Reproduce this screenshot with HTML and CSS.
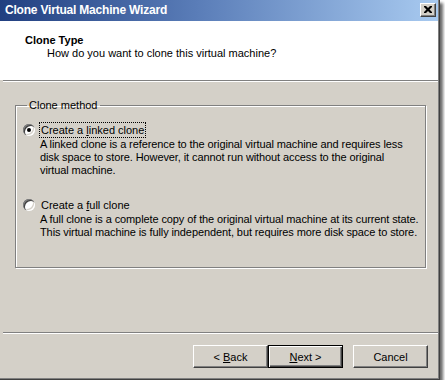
FILE: index.html
```html
<!DOCTYPE html>
<html lang="en">
  <head>
    <meta charset="UTF-8" />
    <title>Clone Virtual Machine Wizard</title>
    <link rel="stylesheet" href="styles.css">
  </head>
  <body>
    <div class="window">
      <div class="titlebar">
        <span class="title">Clone Virtual Machine Wizard</span>
        <span class="close-btn">
          <svg width="8" height="7" viewBox="0 0 8 7">
            <path d="M0 0h2l2 2 2-2h2v1l-2.5 2.5 2.5 2.5v1h-2l-2-2-2 2h-2v-1l2.5-2.5-2.5-2.5z" fill="#000" />
          </svg>
        </span>
      </div>

      <div class="header">
        <h1>Clone Type</h1>
        <p>How do you want to clone this virtual machine?</p>
      </div>
      <div class="separator"></div>

      <div class="content">
        <fieldset class="group">
          <legend>Clone method</legend>

          <div class="option">
            <div class="option-row">
              <span class="radio checked"></span>
              <span class="option-label focused">Create a <u>l</u>inked clone</span>
            </div>
            <p class="option-desc">
              A linked clone is a reference to the original virtual machine and requires less<br>
              disk space to store. However, it cannot run without access to the original<br>
              virtual machine.
            </p>
          </div>

          <div class="option">
            <div class="option-row">
              <span class="radio"></span>
              <span class="option-label">Create a <u>f</u>ull clone</span>
            </div>
            <p class="option-desc">
              A full clone is a complete copy of the original virtual machine at its current state.<br>
              This virtual machine is fully independent, but requires more disk space to store.
            </p>
          </div>
        </fieldset>
      </div>

      <div class="separator"></div>
      <div class="footer">
        <button class="btn">&lt; <u>B</u>ack</button>
        <button class="btn default"><u>N</u>ext &gt;</button>
        <button class="btn cancel">Cancel</button>
      </div>
    </div>
  </body>
</html>
```

FILE: styles.css
```css
/* Reset and base */
* {
  margin: 0;
  padding: 0;
  box-sizing: border-box;
}

body {
  background: #fff;
  font-family: "Liberation Sans", Arial, sans-serif;
  font-size: 11px;
  color: #000;
}

.window {
  width: 440px;
  height: 380px;
  background: #d4d0c8;
  border-right: 1px solid #404040;
  border-bottom: 1px solid #404040;
  box-shadow: inset -1px -1px 0 #808080, 3px 3px 3px rgba(0, 0, 0, 0.6);
  display: flex;
  flex-direction: column;
}

/* Title bar */
.titlebar {
  width: 438px;
  height: 21px;
  background: linear-gradient(to right, #213f80 0%, #5a7db8 45%, #a8caf0 100%);
  display: flex;
  align-items: center;
  justify-content: space-between;
  padding: 0 2px 1px 5px;
}

.title {
  color: #fff;
  font-weight: 700;
  font-size: 12px;
  letter-spacing: -0.2px;
}

.close-btn {
  flex: none;
  width: 16px;
  height: 14px;
  background: #d4d0c8;
  border: 1px solid;
  border-color: #fff #404040 #404040 #fff;
  box-shadow: inset -1px -1px 0 #808080;
  display: flex;
  align-items: center;
  justify-content: center;
  padding: 0 1px 1px 0;
}

/* Header */
.header {
  width: 438px;
  height: 59px;
  background: #fff;
  padding: 12px 0 0 25px;
}

.header h1 {
  font-size: 11px;
  font-weight: 700;
  line-height: 14px;
}

.header p {
  line-height: 13px;
  padding-left: 22px;
}

.separator {
  width: 435px;
  height: 2px;
  margin-left: 3px;
  border-top: 1px solid #808080;
  border-bottom: 1px solid #fff;
}

/* Content */
.content {
  height: 250px;
  padding: 17px 0 0 15px;
}

.group {
  width: 411px;
  height: 169px;
  border: 1px solid #808080;
  box-shadow: inset 1px 1px 0 #fff, 1px 1px 0 #fff;
  padding: 10px 0 0 7px;
}

.group legend {
  margin-left: 4px;
  padding: 0 2px;
  line-height: 13px;
}

.option + .option {
  margin-top: 20px;
}

.option-row {
  display: flex;
  align-items: center;
  gap: 4px;
  height: 16px;
}

.radio {
  width: 12px;
  height: 12px;
  border-radius: 50%;
  background: #fff;
  box-shadow: inset 1px 1px 0 #808080, inset 2px 2px 0 #404040,
    inset -1px -1px 0 #fff, inset -2px -2px 0 #d4d0c8;
  display: flex;
  align-items: center;
  justify-content: center;
}

.radio.checked::after {
  content: "";
  width: 4px;
  height: 4px;
  border-radius: 50%;
  background: #000;
}

.option-label {
  line-height: 14px;
  padding: 0 1px;
  border: 1px solid transparent;
}

.option-label.focused {
  border: 1px dotted #000;
}

.option-desc {
  line-height: 13px;
  padding-left: 17px;
  white-space: nowrap;
  letter-spacing: -0.1px;
}

/* Footer buttons */
.footer {
  display: flex;
  justify-content: flex-end;
  padding: 11px 11px 0 0;
}

.btn {
  width: 75px;
  height: 23px;
  background: #d4d0c8;
  border: 1px solid;
  border-color: #fff #404040 #404040 #fff;
  box-shadow: inset -1px -1px 0 #808080;
  font-family: inherit;
  font-size: 11px;
  color: #000;
}

.btn.default {
  border: 1px solid #000;
  box-shadow: inset 1px 1px 0 #fff, inset -1px -1px 0 #404040,
    inset -2px -2px 0 #808080;
}

.btn.cancel {
  margin-left: 10px;
}
```
